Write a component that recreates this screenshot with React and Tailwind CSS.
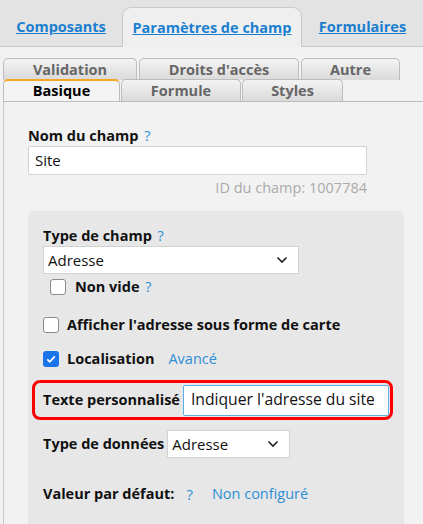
import React from "react";

const Help = ({ className = "" }) => (
  <span className={`text-[#2d8fd5] font-normal ${className}`}>?</span>
);

const Chevron = () => (
  <svg width="12" height="8" viewBox="0 0 12 8" className="shrink-0">
    <path d="M1.5 1.5 L6 6 L10.5 1.5" fill="none" stroke="#222" strokeWidth="1.6" />
  </svg>
);

const Checkbox = ({ checked }) =>
  checked ? (
    <span className="w-4 h-4 rounded-[3px] bg-[#1a73e8] flex items-center justify-center shrink-0">
      <svg width="12" height="12" viewBox="0 0 12 12">
        <path d="M2.2 6.3 L4.8 8.8 L9.8 3.3" fill="none" stroke="#fff" strokeWidth="1.8" />
      </svg>
    </span>
  ) : (
    <span className="w-4 h-4 rounded-[3px] bg-white border border-[#8a8a8a] shrink-0" />
  );

function SubTab({ label, width, active }) {
  if (active) {
    return (
      <div
        style={{ width }}
        className="h-[22px] -mb-px relative z-10 flex items-center justify-center rounded-t-[5px] border border-b-0 border-[#bdbdbd] border-t-2 border-t-[#f5a623] bg-[#f4f4f4] text-black font-bold text-[14.5px]"
      >
        {label}
      </div>
    );
  }
  return (
    <div
      style={{ width }}
      className="h-[22px] flex items-center justify-center rounded-t-[5px] border border-b-0 border-[#bdbdbd] bg-gradient-to-b from-[#f3f3f3] to-[#dadada] text-[#666] font-bold text-[14.5px]"
    >
      {label}
    </div>
  );
}

export default function App() {
  return (
    <div
      className="w-[423px] h-[524px] overflow-hidden bg-[#f2f2f2] text-[#111] text-[14.5px]"
      style={{ fontFamily: '"Open Sans", sans-serif' }}
    >
      {/* top tabs */}
      <div className="h-[47px] bg-[#e3e3e3] border-b border-[#c9c9c9] flex items-end">
        <a className="w-[122px] h-[39px] flex items-center justify-center text-[#1a7fd0] underline font-bold">
          Composants
        </a>
        <a className="w-[180px] h-[40px] -mb-px flex items-center justify-center rounded-t-[9px] border border-b-0 border-[#c9c9c9] bg-[#efefef] text-[#1a7fd0] underline font-bold">
          Paramètres de champ
        </a>
        <a className="w-[121px] h-[39px] flex items-center justify-center text-[#1a7fd0] underline font-bold">
          Formulaires
        </a>
      </div>

      {/* sub tabs */}
      <div className="pt-[11px] pl-[3px]">
        <div className="flex gap-[2px]">
          <SubTab label="Validation" width={134} />
          <SubTab label="Droits d'accès" width={160} />
          <SubTab label="Autre" width={99} />
        </div>
        <div className="flex gap-[1px] border-b border-[#bdbdbd] -mt-px">
          <SubTab label="Basique" width={117} active />
          <SubTab label="Formule" width={120} />
          <SubTab label="Styles" width={101} />
        </div>
      </div>

      {/* content */}
      <div className="ml-[3px] border-l border-[#c9c9c9] h-full pl-[24px] pr-[18px] pt-[24px]">
        <div className="font-bold leading-[20px]">
          Nom du champ <Help className="ml-0.5" />
        </div>
        <div className="w-[339px] h-[29px] bg-white border border-[#d2d2d2] rounded-[2px] flex items-center px-[6px] text-[15px]">
          Site
        </div>
        <div className="w-[339px] text-right text-[#aaa] mt-[3px] leading-[20px]">
          ID du champ: 1007784
        </div>

        <div className="mt-[13px] w-[376px] bg-[#e7e7e7] rounded-t-[7px] pl-[15px] pr-[12px] pt-[15px] pb-10">
          <div className="font-bold leading-[20px]">
            Type de champ <Help className="ml-0.5" />
          </div>
          <div className="w-[256px] h-[28px] bg-white border border-[#d2d2d2] flex items-center justify-between pl-[4px] pr-[10px] text-[15px]">
            Adresse
            <Chevron />
          </div>
          <div className="flex items-center gap-[9px] ml-[7px] mt-[4px] h-[18px]">
            <Checkbox />
            <span className="font-bold">
              Non vide <Help className="ml-0.5" />
            </span>
          </div>

          <div className="flex items-center gap-[8px] mt-[20px] h-[18px]">
            <Checkbox />
            <span className="font-bold">Afficher l'adresse sous forme de carte</span>
          </div>

          <div className="flex items-center gap-[8px] mt-[16px] h-[18px]">
            <Checkbox checked />
            <span className="font-bold">Localisation</span>
            <span className="text-[#2d8fd5] ml-[6px]">Avancé</span>
          </div>

          <div className="-ml-[11px] mt-[12px] w-[361px] h-[40px] border-[3px] border-[#ff0000] rounded-[8px] flex items-center pl-[8px] pr-[1px]">
            <span className="font-bold whitespace-nowrap">Texte personnalisé</span>
            <div className="ml-[3px] flex-1 h-[31px] bg-white border border-[#5aaee6] rounded-[2px] flex items-center pl-[7px] text-[15.7px] whitespace-nowrap overflow-hidden">
              Indiquer l'adresse du site
            </div>
          </div>

          <div className="flex items-center mt-[10px]">
            <span className="font-bold whitespace-nowrap">Type de données</span>
            <div className="ml-[3px] w-[123px] h-[28px] bg-white border border-[#d2d2d2] flex items-center justify-between pl-[4px] pr-[10px] text-[15px]">
              Adresse
              <Chevron />
            </div>
          </div>

          <div className="flex items-center mt-[25px]">
            <span className="font-bold">Valeur par défaut:</span>
            <Help className="ml-[12px] text-[15px]" />
            <span className="text-[#2d8fd5] ml-[19px]">Non configuré</span>
          </div>
        </div>
      </div>
    </div>
  );
}
